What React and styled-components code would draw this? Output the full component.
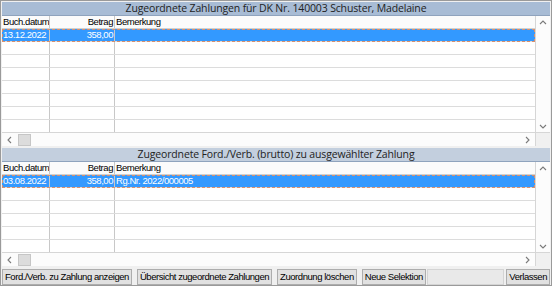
import React from 'react';
import styled, { createGlobalStyle } from 'styled-components';

const GlobalStyle = createGlobalStyle`
  html, body {
    margin: 0;
    padding: 0;
    background: #f0f0f0;
  }
  * {
    box-sizing: border-box;
  }
`;

const COLS = '48px 65px 1fr';

const payments = [{ date: '13.12.2022', amount: '358,00', note: '' }];
const claims = [{ date: '03.08.2022', amount: '358,00', note: 'Rg.Nr. 2022/000005' }];

const Chevron = ({ dir }) => {
  const paths = {
    up: 'M2 6 L5 3 L8 6',
    down: 'M2 4 L5 7 L8 4',
    left: 'M6 2 L3 5 L6 8',
    right: 'M4 2 L7 5 L4 8',
  };
  return (
    <svg width="10" height="10" viewBox="0 0 10 10">
      <path d={paths[dir]} fill="none" stroke="#7a7a7a" strokeWidth="1.1" />
    </svg>
  );
};

const DataGrid = ({ title, titleBg, rows, rowCount, height }) => {
  const filled = Array.from({ length: rowCount }, (c, idx) => rows[idx] || null);
  return (
    <Panel style={{ height }}>
      <Title bg={titleBg}>{title}</Title>
      <GridArea>
        <Table>
          <HeaderRow>
            <Cell>Buch.datum</Cell>
            <Cell align="right">Betrag</Cell>
            <Cell last>Bemerkung</Cell>
          </HeaderRow>
          {filled.map((row, idx) => (
            <Row key={idx} selected={idx === 0 && !!row}>
              <Cell>{row ? row.date : ''}</Cell>
              <Cell align="right">{row ? row.amount : ''}</Cell>
              <Cell last>{row ? row.note : ''}</Cell>
            </Row>
          ))}
        </Table>
        <VScroll>
          <Chevron dir="up" />
          <Chevron dir="down" />
        </VScroll>
      </GridArea>
      <HScrollRow>
        <HScroll>
          <Chevron dir="left" />
          <Thumb />
          <Spacer />
          <Chevron dir="right" />
        </HScroll>
        <Corner />
      </HScrollRow>
    </Panel>
  );
};

const App = () => {
  return (
    <>
      <GlobalStyle />
      <Window>
        <DataGrid
          title="Zugeordnete Zahlungen für DK Nr. 140003 Schuster, Madelaine"
          titleBg="#a8bcd5"
          rows={payments}
          rowCount={9}
          height={144}
        />
        <DataGrid
          title="Zugeordnete Ford./Verb. (brutto) zu ausgewählter Zahlung"
          titleBg="#c3cfde"
          rows={claims}
          rowCount={6}
          height={118}
        />
        <ButtonBar>
          <Button>Ford./Verb. zu Zahlung anzeigen</Button>
          <Button>Übersicht zugeordnete Zahlungen</Button>
          <Button>Zuordnung löschen</Button>
          <Button>Neue Selektion</Button>
          <EmptySlot />
          <Button>Verlassen</Button>
        </ButtonBar>
      </Window>
    </>
  );
};

export default App;

const Window = styled.div`
  width: 552px;
  height: 286px;
  border: 1px solid #9a9a9a;
  padding: 1px;
  display: flex;
  flex-direction: column;
  gap: 2px;
  background: #f0f0f0;
  font-family: 'Liberation Sans', Arial, sans-serif;
  font-size: 9.5px;
  letter-spacing: -0.45px;
  color: #000;
  overflow: hidden;
`;

const Panel = styled.div`
  display: flex;
  flex-direction: column;
  background: #fff;
  flex-shrink: 0;
`;

const Title = styled.div`
  height: 14px;
  flex-shrink: 0;
  background: ${(p) => p.bg};
  border-bottom: 1px solid #8fa3bd;
  font-family: 'Open Sans', 'Noto Sans', sans-serif;
  font-size: 10.5px;
  letter-spacing: -0.15px;
  line-height: 13px;
  text-align: center;
  color: #222;
`;

const GridArea = styled.div`
  flex: 1;
  display: flex;
  min-height: 0;
  overflow: hidden;
`;

const Table = styled.div`
  flex: 1;
  display: flex;
  flex-direction: column;
  overflow: hidden;
`;

const HeaderRow = styled.div`
  display: grid;
  grid-template-columns: ${COLS};
  height: 13px;
  flex-shrink: 0;
  background: #fbfbfb;
  border-bottom: 1px solid #d0d0d0;
`;

const Row = styled.div`
  display: grid;
  grid-template-columns: ${COLS};
  height: 13px;
  flex-shrink: 0;
  border-bottom: 1px solid #dcdcdc;
  background: ${(p) => (p.selected ? '#3399ff' : '#fff')};
  color: ${(p) => (p.selected ? '#fff' : '#000')};
  outline: ${(p) => (p.selected ? '1px dashed #d9906e' : 'none')};
  outline-offset: -1px;
`;

const Cell = styled.div`
  padding: 0 1px 0 1px;
  line-height: 12px;
  white-space: nowrap;
  overflow: hidden;
  text-align: ${(p) => p.align || 'left'};
  border-right: ${(p) => (p.last ? 'none' : '1px solid #c8c8c8')};
`;

const VScroll = styled.div`
  width: 15px;
  flex-shrink: 0;
  background: #fcfcfc;
  border-left: 1px solid #d6d6d6;
  display: flex;
  flex-direction: column;
  justify-content: space-between;
  align-items: center;
  padding: 2px 0 1px;
`;

const HScrollRow = styled.div`
  height: 14px;
  flex-shrink: 0;
  display: flex;
  border-top: 1px solid #d6d6d6;
`;

const HScroll = styled.div`
  flex: 1;
  display: flex;
  align-items: center;
  padding: 0 3px;
  background: #fcfcfc;
`;

const Thumb = styled.div`
  width: 13px;
  height: 12px;
  margin-left: 3px;
  background: #dcdcdc;
  border: 1px solid #c6c6c6;
`;

const Spacer = styled.div`
  flex: 1;
`;

const Corner = styled.div`
  width: 15px;
  background: #f0f0f0;
  border-left: 1px solid #d6d6d6;
`;

const ButtonBar = styled.div`
  height: 17px;
  flex-shrink: 0;
  display: flex;
  gap: 5px;
  padding-top: 1px;
`;

const Button = styled.button`
  height: 16px;
  padding: 0 2px;
  margin: 0;
  font: inherit;
  letter-spacing: inherit;
  color: #000;
  background: #e1e1e1;
  border: 1px solid #adadad;
  border-radius: 0;
  white-space: nowrap;
  line-height: 14px;
`;

const EmptySlot = styled.div`
  flex: 1;
  height: 16px;
  margin: 0 -3px 0 -4px;
  background: #e9e9e9;
  border: 1px solid #d4d4d4;
`;
